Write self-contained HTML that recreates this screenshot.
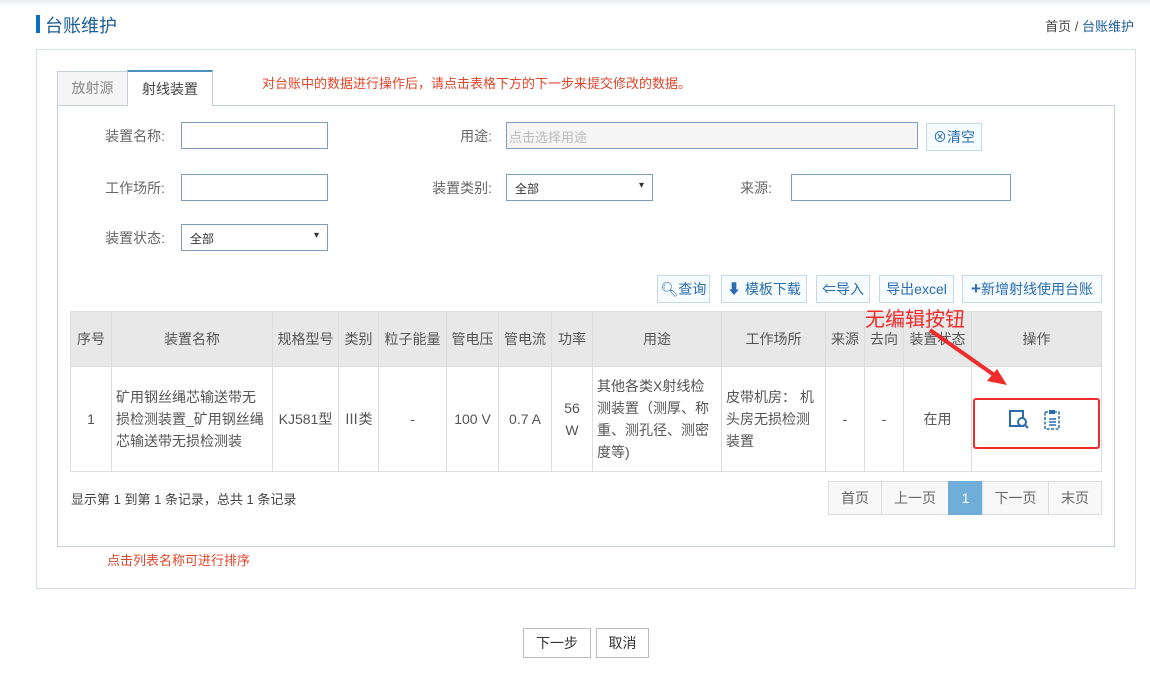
<!DOCTYPE html><html><head><meta charset="utf-8"><style>
*{box-sizing:border-box;margin:0;padding:0}
body{width:1150px;height:688px;background:#fff;font-family:"Liberation Sans","Noto Sans CJK SC",sans-serif;font-size:13px;color:#555;position:relative;overflow:hidden}
.a{position:absolute}
.inp{position:absolute;border:1px solid #7f9db9;height:27px;background:#fff;font-size:12px;color:#333;padding:5px 8px}
.lbl{position:absolute;font-size:14px;color:#666;text-align:right}
.btn{position:absolute;top:275px;height:28px;border:1px solid #c5dbe8;background:#f6fbfe;color:#2a6eb0;font-size:14px;line-height:26px;text-align:center}
table{position:absolute;left:70px;top:311px;border-collapse:collapse;font-size:14px;color:#555}
td{border:1px solid #ddd;text-align:center;padding:0 4px}
thead td{background:#e8e8e8;height:55px}
tbody td{height:105px;line-height:22px}
.pg{position:absolute;top:481px;height:34px;border:1px solid #ddd;background:#f8f8f8;line-height:32px;text-align:center;font-size:14px;color:#666}
.bb{position:absolute;top:628px;height:30px;border:1px solid #bbb;background:#fff;line-height:28px;text-align:center;font-size:14px;color:#333}
</style></head><body>
<div class="a" style="left:0;top:0;width:1150px;height:6px;background:linear-gradient(#e6e9ee,#fff)"></div>
<div class="a" style="left:36px;top:15px;width:4px;height:18px;background:#0a6fc2"></div>
<div class="a" style="left:45px;top:12px;font-size:18px;color:#1b5d98">台账维护</div>
<div class="a" style="right:16px;top:16px;font-size:13px;color:#444">首页 / <span style="color:#1b5d98">台账维护</span></div>
<div class="a" style="left:36px;top:49px;width:1100px;height:540px;border:1px solid #d6dde6"></div>
<div class="a" style="left:57px;top:105px;width:1058px;height:442px;border:1px solid #c5d0dc"></div>
<div class="a" style="left:57px;top:71px;width:71px;height:35px;border:1px solid #c5d0dc;background:#f5f5f5;color:#888;font-size:14px;text-align:center;line-height:33px">放射源</div>
<div class="a" style="left:127px;top:70px;width:86px;height:36px;border:1px solid #c5d0dc;border-top:2px solid #4c8fbd;border-bottom:none;background:#fff;color:#444;font-size:14px;text-align:center;line-height:34px">射线装置</div>
<div class="a" style="left:262px;top:73px;font-size:13px;color:#e0452a">对台账中的数据进行操作后，请点击表格下方的下一步来提交修改的数据。</div>

<div class="lbl" style="left:80px;top:126px;width:85px">装置名称:</div>
<div class="inp" style="left:181px;top:122px;width:147px"></div>
<div class="lbl" style="left:420px;top:126px;width:72px">用途:</div>
<div class="inp" style="left:506px;top:122px;width:412px;background:#f5f5f5;color:#bbb;font-size:13px;padding:4px 2px">点击选择用途</div>
<div class="a" style="left:926px;top:123px;width:56px;height:28px;border:1px solid #c5dbe8;background:#f6fbfe;color:#2a6eb0;font-size:14px;line-height:26px;text-align:center">⊗清空</div>

<div class="lbl" style="left:80px;top:178px;width:85px">工作场所:</div>
<div class="inp" style="left:181px;top:174px;width:147px"></div>
<div class="lbl" style="left:400px;top:178px;width:92px">装置类别:</div>
<div class="inp" style="left:506px;top:174px;width:147px">全部<span style="float:right;font-size:10px">▾</span></div>
<div class="lbl" style="left:700px;top:178px;width:72px">来源:</div>
<div class="inp" style="left:791px;top:174px;width:220px"></div>

<div class="lbl" style="left:80px;top:228px;width:85px">装置状态:</div>
<div class="inp" style="left:181px;top:224px;width:147px">全部<span style="float:right;font-size:10px">▾</span></div>

<div class="btn" style="left:657px;width:53px">🔍︎查询</div>
<div class="btn" style="left:721px;width:86px">⬇ 模板下载</div>
<div class="btn" style="left:816px;width:54px">⇐导入</div>
<div class="btn" style="left:879px;width:75px">导出excel</div>
<div class="btn" style="left:962px;width:140px"><b style="font-size:17px">+</b>新增射线使用台账</div>

<table><thead><tr>
<td style="width:41px">序号</td><td style="width:161px">装置名称</td><td style="width:66px">规格型号</td><td style="width:40px">类别</td><td style="width:68px">粒子能量</td><td style="width:52px">管电压</td><td style="width:53px">管电流</td><td style="width:41px">功率</td><td style="width:129px">用途</td><td style="width:104px">工作场所</td><td style="width:39px">来源</td><td style="width:39px">去向</td><td style="width:68px">装置状态</td><td style="width:130px">操作</td>
</tr></thead><tbody><tr>
<td>1</td><td style="text-align:left">矿用钢丝绳芯输送带无损检测装置_矿用钢丝绳芯输送带无损检测装</td><td>KJ581型</td><td>Ⅲ类</td><td>-</td><td>100 V</td><td>0.7 A</td><td>56 W</td><td style="text-align:left">其他各类X射线检测装置（测厚、称重、测孔径、测密度等)</td><td style="text-align:left">皮带机房： 机头房无损检测装置</td><td>-</td><td>-</td><td>在用</td><td></td>
</tr></tbody></table>

<svg class="a" style="left:1008px;top:409px" width="22" height="22" viewBox="0 0 22 22"><rect x="2" y="2" width="13" height="15" fill="none" stroke="#2a6eb0" stroke-width="2"/><circle cx="14" cy="13" r="4" fill="#fff" stroke="#2a6eb0" stroke-width="2"/><line x1="17" y1="16" x2="20" y2="19" stroke="#2a6eb0" stroke-width="2"/></svg>
<svg class="a" style="left:1043px;top:409px" width="18" height="22" viewBox="0 0 18 22"><rect x="2" y="3" width="14" height="17" fill="none" stroke="#2a6eb0" stroke-width="1.5" stroke-dasharray="3 1.5"/><rect x="6" y="1" width="6" height="4" fill="#2a6eb0"/><path d="M6 10h7M6 13h7M6 16h7" stroke="#2a6eb0" stroke-width="1.5"/></svg>
<div class="a" style="left:973px;top:398px;width:127px;height:51px;border:2px solid #f02b2b;border-radius:3px"></div>
<div class="a" style="left:865px;top:303px;font-size:20px;color:#f02b2b">无编辑按钮</div>
<svg class="a" style="left:925px;top:325px" width="90" height="70"><line x1="5" y1="5" x2="72" y2="52" stroke="#f02b2b" stroke-width="4"/><polygon points="82,60 62,56 72,44" fill="#f02b2b"/></svg>

<div class="a" style="left:71px;top:489px;font-size:13px;color:#444">显示第 1 到第 1 条记录，总共 1 条记录</div>
<div class="pg" style="left:828px;width:54px">首页</div>
<div class="pg" style="left:881px;width:68px">上一页</div>
<div class="pg" style="left:948px;width:35px;background:#6faed9;border-color:#6faed9;color:#fff">1</div>
<div class="pg" style="left:982px;width:67px">下一页</div>
<div class="pg" style="left:1048px;width:54px">末页</div>

<div class="a" style="left:107px;top:550px;font-size:13px;color:#e0452a">点击列表名称可进行排序</div>
<div class="bb" style="left:523px;width:68px">下一步</div>
<div class="bb" style="left:596px;width:53px">取消</div>
</body></html>
